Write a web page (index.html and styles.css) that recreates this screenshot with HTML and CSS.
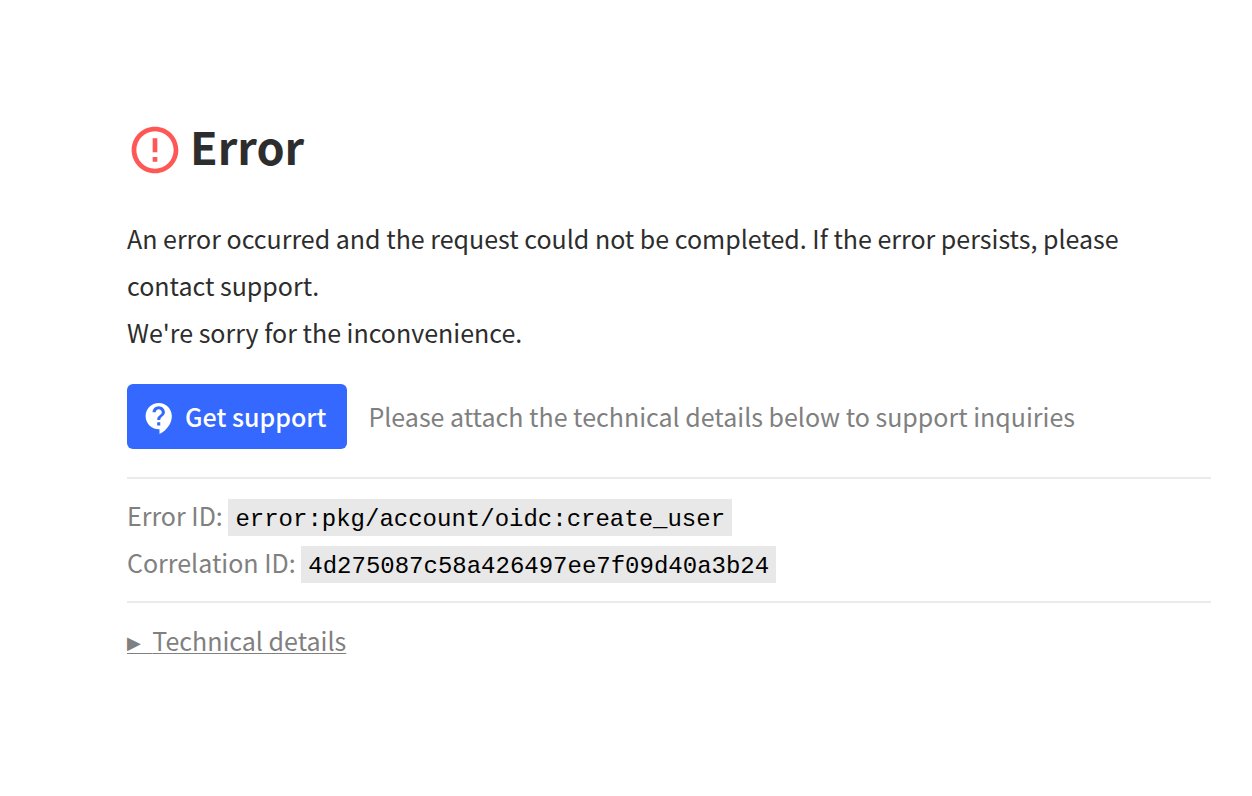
FILE: index.html
```
<!DOCTYPE html>
<html lang="en">
<head>
    <meta charset="UTF-8">
    <meta name="viewport" content="width=device-width, initial-scale=1.0">
    <title>Error</title>
    <link rel="stylesheet" href="styles.css">
</head>
<body>
    <main class="error-page">
        <h1 class="title">
            <svg class="title-icon" viewBox="0 0 24 24" aria-hidden="true">
                <path d="M11 15h2v2h-2zm0-8h2v6h-2zm.99-5C6.47 2 2 6.48 2 12s4.47 10 9.99 10C17.52 22 22 17.52 22 12S17.52 2 11.99 2zM12 20c-4.42 0-8-3.580-8-8s3.580-8 8-8 8 3.580 8 8-3.580 8-8 8z"/>
            </svg>
            Error
        </h1>
        <p class="message">
            An error occurred and the request could not be completed. If the error persists, please contact support.<br>
            We're sorry for the inconvenience.
        </p>
        <div class="actions">
            <button type="button" class="button">
                <svg class="button-icon" viewBox="0 0 24 24" aria-hidden="true">
                    <path d="M11.500 2C6.810 2 3 5.810 3 10.500S6.810 19 11.500 19h.5v3c4.860-2.340 8-7 8-11.500C20 5.810 16.190 2 11.500 2zm1 14.500h-2v-2h2v2zm0-3.500h-2c0-3.250 3-3 3-5 0-1.100-.9-2-2-2s-2 .9-2 2h-2c0-2.210 1.790-4 4-4s4 1.790 4 4c0 2.500-3 2.750-3 5z"/>
                </svg>
                Get support
            </button>
            <span class="hint">Please attach the technical details below to support inquiries</span>
        </div>
        <hr>
        <div class="detail">Error ID: <code>error:pkg/account/oidc:create_user</code></div>
        <div class="detail">Correlation ID: <code>4d275087c58a426497ee7f09d40a3b24</code></div>
        <hr>
        <details>
            <summary>Technical details</summary>
        </details>
    </main>
</body>
</html>
```
FILE: styles.css
```
body {
    margin: 0;
    background: #fff;
    color: #2d2d2d;
    font-family: "Noto Sans CJK SC", "Noto Sans", sans-serif;
    font-size: 25px;
    line-height: 47px;
}
.error-page {
    padding: 122px 41px 120px 127px;
}
.title {
    display: flex;
    align-items: flex-start;
    gap: 7px;
    margin: 0 0 37px;
    font-size: 45px;
    line-height: 47px;
    font-weight: 600;
}
.title-icon {
    width: 56px;
    height: 56px;
    fill: #ff5656;
}
.message {
    margin: 0 0 28px;
}
.actions {
    display: flex;
    align-items: center;
    gap: 21px;
}
.button {
    display: flex;
    align-items: center;
    gap: 7px;
    height: 65px;
    padding: 0 21px 0 14px;
    border: 0;
    border-radius: 6px;
    background: #3468ff;
    color: #fff;
    font: inherit;
    font-weight: 500;
    white-space: nowrap;
    cursor: pointer;
}
.button:hover {
    background: #2456e5;
}
.button-icon {
    width: 37px;
    height: 37px;
    margin-top: 4px;
    fill: #fff;
}
.hint, .detail, summary {
    color: #808080;
}
hr {
    height: 2px;
    margin: 28px 0 13px;
    border: 0;
    background: #ebebeb;
}
.detail + hr {
    margin: 15px 0 14px;
}
code {
    padding: 7px 7px 3px;
    background: #e8e8e8;
    color: #000;
    font-family: "Liberation Mono", monospace;
    font-size: 24px;
    line-height: 24px;
}
summary {
    display: inline-block;
    text-decoration: underline;
    text-decoration-thickness: 1px;
    text-underline-offset: 2px;
    text-decoration-skip-ink: none;
    cursor: pointer;
}
summary::before {
    content: "▶\00a0\00a0";
    font-family: "DejaVu Sans", sans-serif;
    font-size: 18px;
    line-height: 18px;
    vertical-align: 2px;
}
```
